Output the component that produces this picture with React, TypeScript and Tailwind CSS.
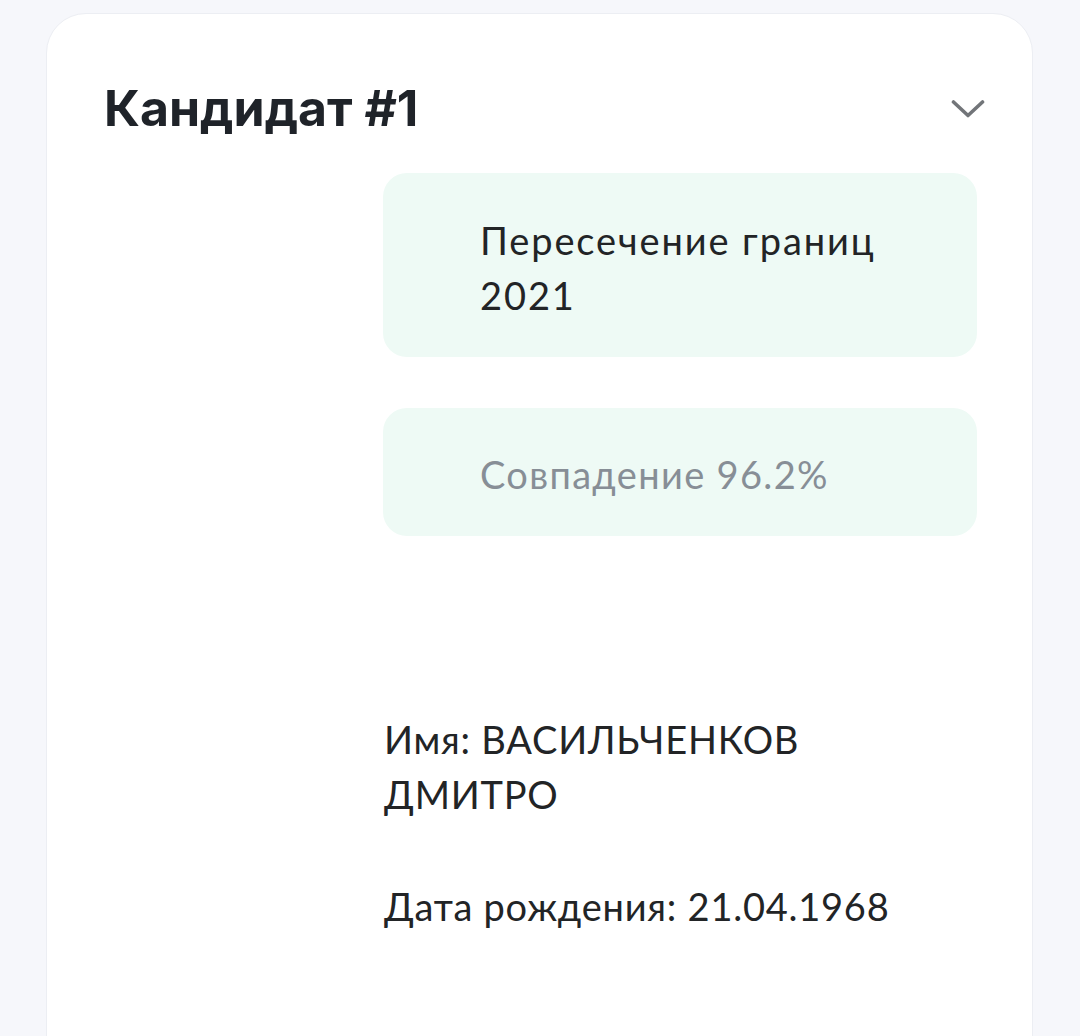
export default function App() {
  return (
    <div className="min-h-[1036px] bg-[#f6f7fb] pt-[13px] pl-[46px] pr-[47px]" style={{ fontFamily: "Lato, 'Noto Sans', sans-serif" }}>
      <div className="min-h-[1100px] rounded-t-[40px] border border-[#eceef3] bg-white pl-[57px] pr-[55px] pt-[67px]">
        <div className="flex items-center justify-between">
          <h2 className="text-[50px] font-bold leading-[55px] text-[#1f2329]" style={{ fontFamily: "Inter, sans-serif" }}>
            Кандидат #1
          </h2>
          <svg width="34" height="20" viewBox="0 0 34 20" className="mr-[-8px]" fill="none">
            <path d="M2.5 3 L17 16.5 L31.5 3" stroke="#727579" strokeWidth="3.6" strokeLinecap="round" strokeLinejoin="round" />
          </svg>
        </div>

        <div className="ml-[279px] mt-[37px] flex flex-col gap-[51px]">
          <div className="rounded-[24px] bg-[#eefaf5] pl-[97px] pr-6 pt-[40px] pb-[34px] text-[38px] leading-[55px] tracking-[0.05em] text-[#222426]">
            Пересечение границ
            <br />
            2021
          </div>
          <div className="rounded-[24px] bg-[#eefaf5] pl-[97px] pr-6 pt-[39px] pb-[34px] text-[38px] leading-[55px] tracking-[0.035em] text-[#878e96]">
            Совпадение 96.2%
          </div>
        </div>

        <div className="ml-[280px] mt-[176px] flex flex-col gap-[57px] text-[38px] leading-[55px] tracking-[0.02em] text-[#222426]">
          <p>
            Имя: ВАСИЛЬЧЕНКОВ
            <br />
            ДМИТРО
          </p>
          <p>Дата рождения: 21.04.1968</p>
        </div>
      </div>
    </div>
  )
}
